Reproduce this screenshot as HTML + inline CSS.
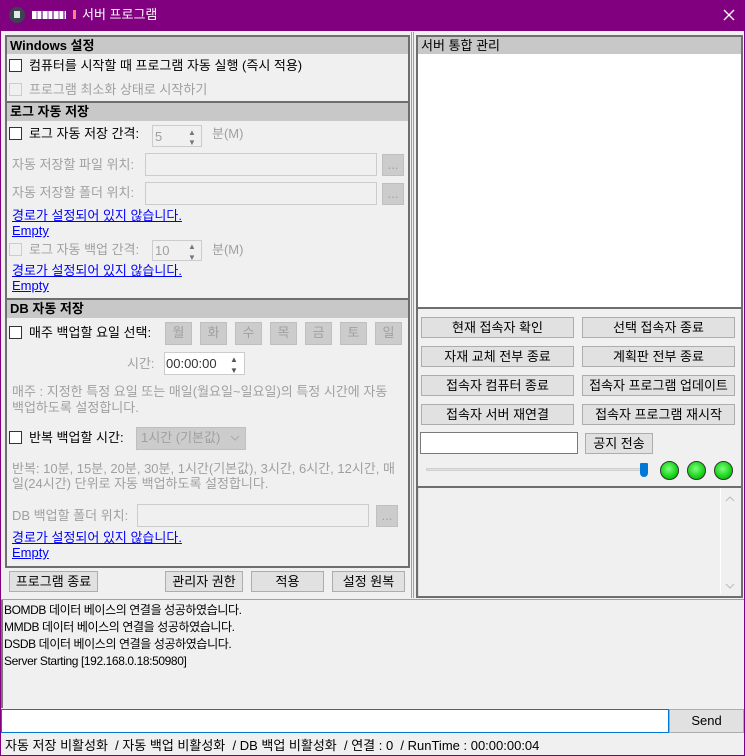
<!DOCTYPE html>
<html><head><meta charset="utf-8"><style>
*{box-sizing:border-box;margin:0;padding:0}
body{width:745px;height:756px;position:relative;background:#f0f0f0;font-family:"Liberation Sans","Noto Sans CJK KR",sans-serif;font-size:13px;color:#000;overflow:hidden}
div,span{position:absolute}
.t{white-space:nowrap;line-height:17px}
.d{color:#a0a0a0}
.cb{width:13px;height:13px;border:1px solid #333;background:#fff}
.cbd{border-color:#ccc;background:#f0f0f0}
.hd{background:#c8c8c8;font-weight:bold;font-size:13px;line-height:18px;padding-left:3px}
.tb{border:1px solid #ccc;background:#f0f0f0}
.bt{background:#e1e1e1;border:1px solid #adadad;text-align:center;line-height:19px;white-space:nowrap}
.bd{background:#cccccc;border:1px solid #bfbfbf;color:#a0a0a0;text-align:center;line-height:20px}
.lk{color:#0000ff;text-decoration:underline}
.led{width:19px;height:19px;border-radius:50%;border:1px solid #333;background:radial-gradient(circle at 45% 40%,#7dff7d,#16d216 60%,#0a9a0a)}
.lg{font-size:12px;letter-spacing:-0.4px}
</style></head><body>
<div style="left:0;top:0;width:745px;height:31px;background:#800080"></div>
<div style="left:9px;top:7px;width:16px;height:16px;border-radius:50%;background:#3a4550"></div>
<div style="left:14px;top:11px;width:6px;height:7px;background:#e8e8e8"></div>
<div style="left:32px;top:11px;width:34px;height:8px;background:repeating-linear-gradient(90deg,#fff 0 4px,#d0a0d0 4px 6px,#fff 6px 9px,#a070c0 9px 11px)"></div>
<div style="left:73px;top:10px;width:3px;height:9px;background:#ff8080"></div>
<div class="t" style="left:82px;top:6px;color:#fff;font-size:13px;line-height:18px">서버 프로그램</div>
<svg style="position:absolute;left:723px;top:9px" width="12" height="12"><path d="M1 1L11 11M11 1L1 11" stroke="#fff" stroke-width="1.3"/></svg>
<div style="left:0;top:31px;width:1px;height:725px;background:#800080"></div>
<div style="left:744px;top:31px;width:1px;height:725px;background:#800080"></div>
<div style="left:0;top:755px;width:745px;height:1px;background:#800080"></div>

<div style="left:5px;top:35px;width:405px;height:533px;border:2px solid #6e6e6e"></div>
<div class="hd" style="left:7px;top:37px;width:401px;height:17px">Windows 설정</div>
<div class="cb" style="left:9px;top:59px"></div>
<div class="t" style="left:29px;top:57px">컴퓨터를 시작할 때 프로그램 자동 실행 (즉시 적용)</div>
<div class="cb cbd" style="left:9px;top:83px"></div>
<div class="t d" style="left:29px;top:81px">프로그램 최소화 상태로 시작하기</div>
<div style="left:5px;top:101px;width:405px;height:2px;background:#6e6e6e"></div>
<div class="hd" style="left:7px;top:103px;width:401px;height:18px">로그 자동 저장</div>
<div class="cb" style="left:9px;top:127px"></div>
<div class="t" style="left:29px;top:125px">로그 자동 저장 간격:</div>
<div class="tb" style="left:152px;top:125px;width:50px;height:22px"></div>
<div class="t d" style="left:155px;top:128px">5</div>
<div class="t" style="left:188px;top:124px;font-size:8px;color:#777">▲</div>
<div class="t" style="left:188px;top:134px;font-size:8px;color:#777">▼</div>
<div class="t d" style="left:212px;top:125px">분(M)</div>
<div class="t d" style="left:12px;top:156px">자동 저장할 파일 위치:</div>
<div class="tb" style="left:145px;top:153px;width:232px;height:23px"></div>
<div class="bd" style="left:382px;top:154px;width:22px;height:22px">...</div>
<div class="t d" style="left:12px;top:184px">자동 저장할 폴더 위치:</div>
<div class="tb" style="left:145px;top:182px;width:232px;height:23px"></div>
<div class="bd" style="left:382px;top:183px;width:22px;height:22px">...</div>
<div class="t lk" style="left:12px;top:207px">경로가 설정되어 있지 않습니다.</div>
<div class="t lk" style="left:12px;top:222px">Empty</div>
<div class="cb cbd" style="left:9px;top:243px"></div>
<div class="t d" style="left:29px;top:241px">로그 자동 백업 간격:</div>
<div class="tb" style="left:152px;top:240px;width:50px;height:21px"></div>
<div class="t d" style="left:155px;top:242px">10</div>
<div class="t" style="left:188px;top:238px;font-size:8px;color:#777">▲</div>
<div class="t" style="left:188px;top:249px;font-size:8px;color:#777">▼</div>
<div class="t d" style="left:212px;top:241px">분(M)</div>
<div class="t lk" style="left:12px;top:262px">경로가 설정되어 있지 않습니다.</div>
<div class="t lk" style="left:12px;top:277px">Empty</div>
<div style="left:5px;top:298px;width:405px;height:2px;background:#6e6e6e"></div>
<div class="hd" style="left:7px;top:300px;width:401px;height:18px">DB 자동 저장</div>
<div class="cb" style="left:9px;top:326px"></div>
<div class="t" style="left:29px;top:324px">매주 백업할 요일 선택:</div>
<div class="bd" style="left:165px;top:322px;width:27px;height:23px">월</div>
<div class="bd" style="left:200px;top:322px;width:27px;height:23px">화</div>
<div class="bd" style="left:235px;top:322px;width:27px;height:23px">수</div>
<div class="bd" style="left:270px;top:322px;width:27px;height:23px">목</div>
<div class="bd" style="left:305px;top:322px;width:27px;height:23px">금</div>
<div class="bd" style="left:340px;top:322px;width:27px;height:23px">토</div>
<div class="bd" style="left:375px;top:322px;width:27px;height:23px">일</div>
<div class="t d" style="left:127px;top:355px">시간:</div>
<div style="left:164px;top:352px;width:81px;height:23px;border:1px solid #ccc;background:#fff"></div>
<div class="t" style="left:166px;top:355px;color:#333">00:00:00</div>
<div class="t" style="left:230px;top:351px;font-size:8px;color:#555">▲</div>
<div class="t" style="left:230px;top:362px;font-size:8px;color:#555">▼</div>
<div class="t d" style="left:12px;top:383px">매주 : 지정한 특정 요일 또는 매일(월요일~일요일)의 특정 시간에 자동</div>
<div class="t d" style="left:12px;top:399px">백업하도록 설정합니다.</div>
<div class="cb" style="left:9px;top:431px"></div>
<div class="t" style="left:29px;top:429px">반복 백업할 시간:</div>
<div class="bd" style="left:136px;top:427px;width:110px;height:23px;text-align:left;padding-left:4px">1시간 (기본값)</div>
<svg style="position:absolute;left:230px;top:435px" width="10" height="6"><path d="M1 1L5 5L9 1" stroke="#aaa" fill="none"/></svg>
<div class="t d" style="left:12px;top:460px">반복: 10분, 15분, 20분, 30분, 1시간(기본값), 3시간, 6시간, 12시간, 매</div>
<div class="t d" style="left:12px;top:475px">일(24시간) 단위로 자동 백업하도록 설정합니다.</div>
<div class="t d" style="left:12px;top:507px">DB 백업할 폴더 위치:</div>
<div class="tb" style="left:137px;top:504px;width:232px;height:23px"></div>
<div class="bd" style="left:376px;top:505px;width:22px;height:22px">...</div>
<div class="t lk" style="left:12px;top:529px">경로가 설정되어 있지 않습니다.</div>
<div class="t lk" style="left:12px;top:544px">Empty</div>
<div class="bt" style="left:9px;top:571px;width:89px;height:21px">프로그램 종료</div>
<div class="bt" style="left:165px;top:571px;width:78px;height:21px">관리자 권한</div>
<div class="bt" style="left:251px;top:571px;width:73px;height:21px">적용</div>
<div class="bt" style="left:332px;top:571px;width:73px;height:21px">설정 원복</div>

<div style="left:411px;top:32px;width:1px;height:566px;background:#a0a0a0"></div>
<div style="left:413px;top:32px;width:1px;height:566px;background:#a0a0a0"></div>

<div style="left:416px;top:35px;width:327px;height:563px;border:2px solid #6e6e6e"></div>
<div class="hd" style="left:418px;top:37px;width:323px;height:17px;font-weight:normal">서버 통합 관리</div>
<div style="left:418px;top:54px;width:323px;height:255px;background:#fff;border-bottom:2px solid #6e6e6e"></div>
<div class="bt" style="left:421px;top:317px;width:153px;height:21px">현재 접속자 확인</div>
<div class="bt" style="left:582px;top:317px;width:153px;height:21px">선택 접속자 종료</div>
<div class="bt" style="left:421px;top:346px;width:153px;height:21px">자재 교체 전부 종료</div>
<div class="bt" style="left:582px;top:346px;width:153px;height:21px">계획판 전부 종료</div>
<div class="bt" style="left:421px;top:375px;width:153px;height:21px">접속자 컴퓨터 종료</div>
<div class="bt" style="left:582px;top:375px;width:153px;height:21px">접속자 프로그램 업데이트</div>
<div class="bt" style="left:421px;top:404px;width:153px;height:21px">접속자 서버 재연결</div>
<div class="bt" style="left:582px;top:404px;width:153px;height:21px">접속자 프로그램 재시작</div>
<div style="left:420px;top:432px;width:158px;height:22px;border:1px solid #7a7a7a;background:#fff"></div>
<div class="bt" style="left:585px;top:433px;width:68px;height:21px">공지 전송</div>
<div style="left:426px;top:468px;width:218px;height:3px;background:#e0e0e0;border:1px solid #d0d0d0"></div>
<div style="left:640px;top:463px;width:8px;height:14px;background:#0078d7;border-radius:1px 1px 4px 4px"></div>
<div class="led" style="left:660px;top:461px"></div>
<div class="led" style="left:687px;top:461px"></div>
<div class="led" style="left:714px;top:461px"></div>
<div style="left:416px;top:486px;width:327px;height:2px;background:#6e6e6e"></div>
<div style="left:418px;top:488px;width:323px;height:108px;background:#f0f0f0;border-left:1px solid #ddd"></div>
<div style="left:720px;top:488px;width:1px;height:106px;background:#fff"></div>
<svg style="position:absolute;left:725px;top:496px" width="10" height="6"><path d="M1 5L5 1L9 5" stroke="#bbb" fill="none"/></svg>
<svg style="position:absolute;left:725px;top:583px" width="10" height="6"><path d="M1 1L5 5L9 1" stroke="#bbb" fill="none"/></svg>

<div style="left:1px;top:599px;width:743px;height:1px;background:#a0a0a0"></div>
<div style="left:1px;top:600px;width:2px;height:108px;background:#777"></div>
<div class="t lg" style="left:4px;top:602px">BOMDB 데이터 베이스의 연결을 성공하였습니다.</div>
<div class="t lg" style="left:4px;top:619px">MMDB 데이터 베이스의 연결을 성공하였습니다.</div>
<div class="t lg" style="left:4px;top:636px">DSDB 데이터 베이스의 연결을 성공하였습니다.</div>
<div class="t lg" style="left:4px;top:653px">Server Starting [192.168.0.18:50980]</div>
<div style="left:1px;top:709px;width:668px;height:24px;border:1px solid #0078d7;background:#fff"></div>
<div class="bt" style="left:669px;top:709px;width:75px;height:24px;line-height:22px">Send</div>
<div class="t" style="left:5px;top:737px">자동 저장 비활성화 &nbsp;/ 자동 백업 비활성화 &nbsp;/ DB 백업 비활성화 &nbsp;/ 연결 : 0 &nbsp;/ RunTime : 00:00:00:04</div>
</body></html>
